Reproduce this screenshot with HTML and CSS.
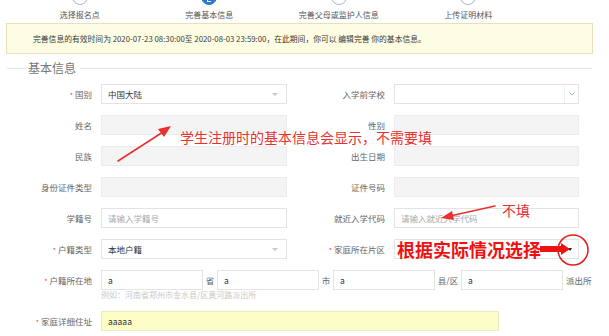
FILE: index.html
```html
<!DOCTYPE html>
<html lang="zh-CN">
<head>
<meta charset="utf-8">
<title>完善基本信息</title>
<link rel="stylesheet" href="styles.css">
</head>
<body>
<div class="page">
  <div class="steps">
    <div class="step"><span class="dot"></span><span class="step-label">选择报名点</span></div>
    <div class="step active"><span class="dot"><span class="dot-mark"></span></span><span class="step-label">完善基本信息</span></div>
    <div class="step"><span class="dot"></span><span class="step-label">完善父母或监护人信息</span></div>
    <div class="step"><span class="dot"></span><span class="step-label">上传证明材料</span></div>
  </div>

  <div class="notice">完善信息的有效时间为 2020-07-23 08:30:00至 2020-08-03 23:59:00，在此期间，你可以 编辑完善 你的基本信息。</div>

  <div class="section-title"><span class="line short"></span><span class="title">基本信息</span><span class="line long"></span></div>

  <div class="form">
    <div class="row">
      <div class="field left"><label class="lbl"><i>*</i> 国别</label><div class="box select">中国大陆<span class="caret"></span></div></div>
      <div class="field right"><label class="lbl">入学前学校</label><div class="box select school"><span class="chev"><svg width="6" height="4" viewBox="0 0 6 4"><polyline points="0.5,0.5 3,3 5.5,0.5" fill="none" stroke="#8fb3d9" stroke-width="1"/></svg></span></div></div>
    </div>
    <div class="row">
      <div class="field left"><label class="lbl">姓名</label><div class="box disabled"></div></div>
      <div class="field right"><label class="lbl">性别</label><div class="box disabled"></div></div>
    </div>
    <div class="row">
      <div class="field left"><label class="lbl">民族</label><div class="box disabled"></div></div>
      <div class="field right"><label class="lbl">出生日期</label><div class="box disabled"></div></div>
    </div>
    <div class="row">
      <div class="field left"><label class="lbl">身份证件类型</label><div class="box disabled"></div></div>
      <div class="field right"><label class="lbl">证件号码</label><div class="box disabled"></div></div>
    </div>
    <div class="row">
      <div class="field left"><label class="lbl">学籍号</label><div class="box ph">请输入学籍号</div></div>
      <div class="field right"><label class="lbl">就近入学代码</label><div class="box ph">请输入就近入学代码</div></div>
    </div>
    <div class="row">
      <div class="field left"><label class="lbl"><i>*</i> 户籍类型</label><div class="box select">本地户籍<span class="caret"></span></div></div>
      <div class="field right"><label class="lbl"><i>*</i> 家庭所在片区</label><div class="box select"><span class="tri"></span></div></div>
    </div>
    <div class="row addr">
      <label class="lbl"><i>*</i> 户籍所在地</label>
      <div class="box short">a</div><span class="unit">省</span>
      <div class="box short">a</div><span class="unit">市</span>
      <div class="box short">a</div><span class="unit wide">县/区</span>
      <div class="box short">a</div><span class="unit tail">派出所</span>
    </div>
    <div class="hint">例如：河南省郑州市金水县/区黄河路派出所</div>
    <div class="row">
      <label class="lbl"><i>*</i> 家庭详细住址</label><div class="box long yellow">aaaaa</div>
    </div>
  </div>

  <div class="annotations">
    <svg class="marks" width="609" height="336" viewBox="0 0 609 336">
      <line x1="118" y1="161" x2="163" y2="132" stroke="#e8302e" stroke-width="1.6" stroke-linecap="round"/>
      <polygon points="171,126 158,129 164,137" fill="#e8302e"/>
      <line x1="495" y1="206" x2="450" y2="216" stroke="#e8302e" stroke-width="1.6" stroke-linecap="round"/>
      <polygon points="441,218 452,211 454,220" fill="#e8302e"/>
      <rect x="540" y="246" width="22" height="6" fill="#ee1111"/>
      <polygon points="570,249 561,243 561,255" fill="#ee1111"/>
      <circle cx="573" cy="250" r="15" fill="none" stroke="#e51b1b" stroke-width="1.5"/>
    </svg>
    <span class="note note-main">学生注册时的基本信息会显示，不需要填</span>
    <span class="note note-skip">不填</span>
    <span class="note note-bold">根据实际情况选择</span>
  </div>
</div>
</body>
</html>
```

FILE: styles.css
```css
* { box-sizing: border-box; }

html, body {
  margin: 0;
  padding: 0;
  background: #ffffff;
}

body {
  font-family: "Noto Sans CJK SC", "Noto Sans", "Liberation Sans", sans-serif;
  color: #333;
  width: 609px;
  height: 336px;
  overflow: hidden;
}

.page {
  position: relative;
  width: 609px;
  height: 336px;
}

/* steps */
.steps {
  display: flex;
  height: 23px;
  margin-left: 15px;
}

.step {
  width: 129.5px;
  display: flex;
  flex-direction: column;
  align-items: center;
}

.dot {
  position: relative;
  width: 16px;
  height: 16px;
  margin-top: -11px;
  border-radius: 50%;
  border: 1px solid #a9b8cc;
  background: #fff;
}

.step.active .dot {
  background: #2f78d4;
  border-color: #2f78d4;
}

.dot-mark {
  position: absolute;
  left: 5px;
  top: 9px;
  width: 4px;
  height: 3px;
  border-bottom: 1px solid #fff;
  border-left: 1px solid #fff;
}

.step-label {
  margin-top: 4px;
  font-size: 8px;
  line-height: 12px;
  color: #555;
  white-space: nowrap;
}

/* notice */
.notice {
  margin: 0 16px 0 6px;
  height: 31px;
  border: 1px solid #e6e1bd;
  background: #fdfde3;
  padding-left: 26px;
  font-size: 7.8px;
  line-height: 29px;
  color: #3a3a3a;
  white-space: nowrap;
}

/* section title */
.section-title {
  display: flex;
  align-items: center;
  margin: 7px 17px 0 7px;
  height: 14px;
}

.section-title .line {
  height: 1px;
  background: #e4e4e4;
}

.section-title .short { width: 19px; }
.section-title .long { flex: 1; }

.section-title .title {
  font-size: 12px;
  line-height: 14px;
  color: #777;
  padding: 0 4px 0 2px;
}

/* form */
.form {
  margin-top: 9px;
}

.row {
  display: flex;
  align-items: center;
  height: 20px;
  margin-bottom: 11px;
}

.row.addr {
  margin-bottom: 0;
}

.field {
  display: flex;
  align-items: center;
}

.lbl {
  font-size: 8.5px;
  line-height: 10px;
  color: #666;
  text-align: right;
  white-space: nowrap;
  width: 92px;
  margin-right: 9px;
}

.lbl i {
  font-style: normal;
  color: #e44;
  font-size: 7px;
}

.field.right .lbl {
  width: 98px;
}

.box {
  position: relative;
  height: 20px;
  width: 186px;
  border: 1px solid #e3e3e3;
  background: #fff;
  font-size: 8.5px;
  line-height: 18px;
  padding-left: 6px;
  color: #333;
  white-space: nowrap;
}

.field.right .box { width: 185px; }

.box.disabled {
  background: #f4f4f4;
  border-color: #ececec;
}

.box.ph { color: #aaa; }

.box.select .caret {
  position: absolute;
  right: 8px;
  top: 8px;
  width: 0;
  height: 0;
  border-left: 3px solid transparent;
  border-right: 3px solid transparent;
  border-top: 3px solid #c8c8c8;
}

.box.school .chev {
  position: absolute;
  right: 0;
  top: 0;
  width: 14px;
  height: 18px;
  border-left: 1px solid #f0f0f0;
  display: flex;
  align-items: center;
  justify-content: center;
}

.box.select .tri {
  position: absolute;
  right: 6px;
  top: 8px;
  width: 0;
  height: 0;
  border-left: 2.5px solid transparent;
  border-right: 2.5px solid transparent;
  border-top: 3px solid #222;
}

.box.short { width: 102px; }

.unit {
  font-size: 8.5px;
  color: #666;
  width: 14px;
  text-align: center;
  white-space: nowrap;
}

.unit.wide { width: 26px; }
.unit.tail { width: auto; margin-left: 3px; }

.box.long {
  width: 398px;
}

.box.yellow {
  background: #fcfdc7;
  border-color: #ebebc6;
}

.hint {
  margin: -1px 0 10px 101px;
  height: 12px;
  font-size: 8px;
  line-height: 12px;
  color: #c9c9c9;
}

/* annotations overlay */
.annotations {
  position: absolute;
  left: 0;
  top: 0;
  width: 609px;
  height: 336px;
  pointer-events: none;
}

.marks {
  position: absolute;
  left: 0;
  top: 0;
}

.note {
  position: absolute;
  white-space: nowrap;
}

.note-main {
  left: 180px;
  top: 130px;
  font-size: 14px;
  line-height: 15px;
  color: #e8302e;
}

.note-skip {
  left: 502px;
  top: 202px;
  font-size: 14px;
  line-height: 16px;
  color: #e8302e;
}

.note-bold {
  left: 397px;
  top: 240px;
  font-size: 18px;
  line-height: 18px;
  font-weight: 700;
  color: #ee1111;
}
```
